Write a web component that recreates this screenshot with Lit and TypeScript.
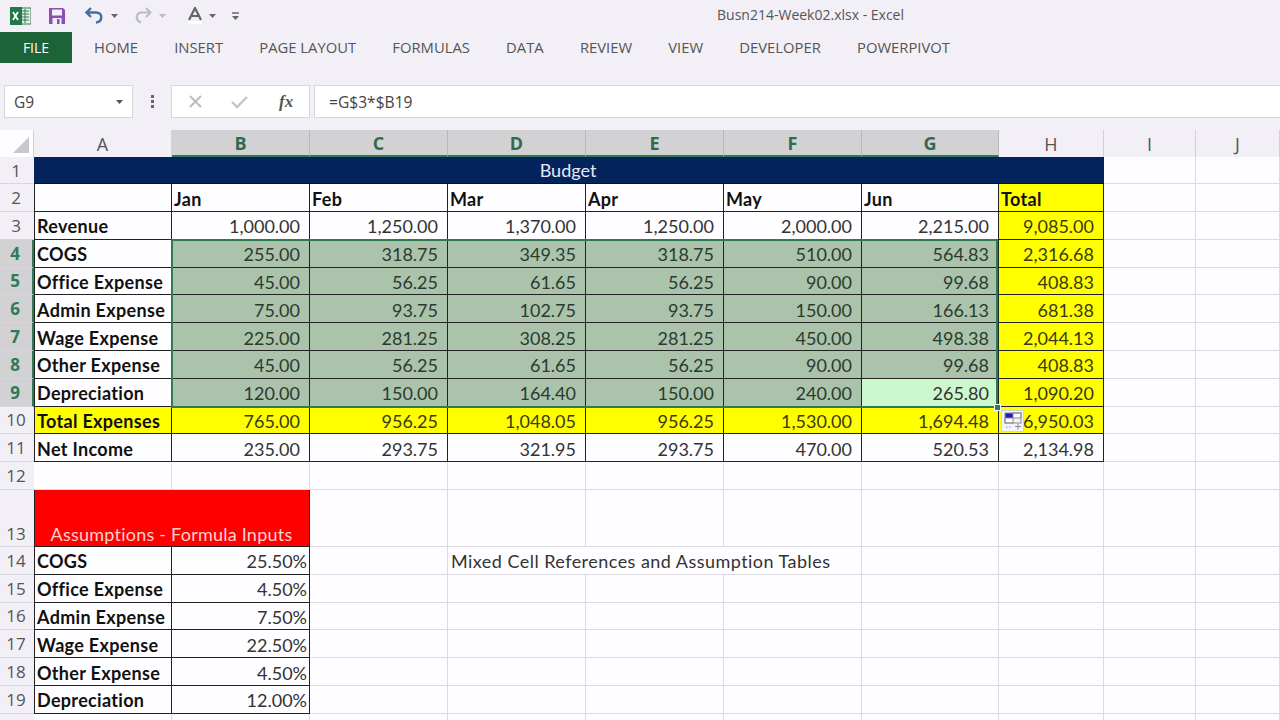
import { LitElement, html, css, svg } from "lit";
import { customElement } from "lit/decorators.js";

const COLS = ["A", "B", "C", "D", "E", "F", "G", "H", "I", "J"];
const MONTHS = ["Jan", "Feb", "Mar", "Apr", "May", "Jun"];
type R = [string, string[], string];
const BODY: R[] = [
  ["Revenue", ["1,000.00", "1,250.00", "1,370.00", "1,250.00", "2,000.00", "2,215.00"], "9,085.00"],
  ["COGS", ["255.00", "318.75", "349.35", "318.75", "510.00", "564.83"], "2,316.68"],
  ["Office Expense", ["45.00", "56.25", "61.65", "56.25", "90.00", "99.68"], "408.83"],
  ["Admin Expense", ["75.00", "93.75", "102.75", "93.75", "150.00", "166.13"], "681.38"],
  ["Wage Expense", ["225.00", "281.25", "308.25", "281.25", "450.00", "498.38"], "2,044.13"],
  ["Other Expense", ["45.00", "56.25", "61.65", "56.25", "90.00", "99.68"], "408.83"],
  ["Depreciation", ["120.00", "150.00", "164.40", "150.00", "240.00", "265.80"], "1,090.20"],
  ["Total Expenses", ["765.00", "956.25", "1,048.05", "956.25", "1,530.00", "1,694.48"], "6,950.03"],
  ["Net Income", ["235.00", "293.75", "321.95", "293.75", "470.00", "520.53"], "2,134.98"],
];
const ASSUME: [string, string][] = [
  ["COGS", "25.50%"],
  ["Office Expense", "4.50%"],
  ["Admin Expense", "7.50%"],
  ["Wage Expense", "22.50%"],
  ["Other Expense", "4.50%"],
  ["Depreciation", "12.00%"],
];
const TABS = ["HOME", "INSERT", "PAGE LAYOUT", "FORMULAS", "DATA", "REVIEW", "VIEW", "DEVELOPER", "POWERPIVOT"];

const caret = svg`<svg class="caret" width="7" height="4" viewBox="0 0 7 4"><path d="M0 0h7L3.5 4z" fill="currentColor"/></svg>`;

@customElement("app-root")
export class AppRoot extends LitElement {
  static styles = css`
    :host {
      display: block;
      width: 1280px;
      height: 720px;
      overflow: hidden;
      background: #f2eff6;
      font-family: "Open Sans", "Liberation Sans", sans-serif;
      color: #444;
    }
    .title { display: flex; align-items: center; height: 31px; }
    .qat { display: flex; align-items: center; padding-left: 10px; height: 30px; }
    .qat svg { display: block; flex: none; }
    .caret { color: #666; }
    .caret.off { color: #bbb; }
    .s1 { margin-left: 17px; }
    .s2 { margin-left: 19px; }
    .s3 { margin-left: 7px; }
    .s4 { margin-left: 16px; }
    .s5 { margin-left: 7px; }
    .s6 { margin-left: 22px; }
    .s7 { margin-left: 7px; }
    .s8 { margin-left: 16px; }
    .doc {
      margin-left: auto;
      padding-right: 376px;
      font-size: 14px;
      color: #555;
      position: relative;
      top: -1px;
    }
    .tabs { display: flex; align-items: center; height: 32px; }
    .file {
      width: 72px;
      height: 31px;
      background: #1c6337;
      color: #fff;
      display: flex;
      align-items: center;
      justify-content: center;
      font-size: 14px;
    }
    .tablist { display: flex; gap: 36.2px; padding-left: 22px; font-size: 14.8px; color: #555; }
    .fbar { display: flex; align-items: stretch; height: 33px; margin-top: 22px; padding-left: 4px; }
    .box { background: #fff; border: 1px solid #d8d6dc; box-sizing: border-box; display: flex; align-items: center; }
    .name { width: 129px; padding: 0 9px 0 9px; justify-content: space-between; font-size: 15.5px; color: #444; }
    .name .caret { color: #555; }
    .dots { width: 38px; display: flex; align-items: center; justify-content: center; }
    .fx { width: 139px; padding-left: 16px; gap: 28px; }
    .fxt { font-family: "Liberation Serif", serif; font-style: italic; font-weight: 700; font-size: 17px; color: #555; margin-left: 3px; }
    .formula { flex: 1; margin-left: 4px; padding-left: 14px; font-size: 15.6px; color: #444; border-right: 0; }

    .sheet {
      position: relative;
      margin-top: 12px;
      display: grid;
      grid-template-columns: 34px 138px 138px 138px 138px 138px 138px 137px 105px 92px 84px;
      grid-template-rows: 27px 27px 28px repeat(10, 27.8px) 57px repeat(6, 27.8px) 27.8px;
      background: #fefdff;
      font-family: Lato, "Open Sans", sans-serif;
      font-size: 18px;
      color: #333;
    }
    .ch, .rh {
      display: flex;
      align-items: center;
      justify-content: center;
      background: #f2eff6;
      box-sizing: border-box;
      color: #555;
      font-family: "Open Sans", sans-serif;
      font-size: 18px;
    }
    .ch { border-right: 1px solid #d3d1d6; padding-top: 1px; }
    .ch.sel { background: #d2d1d3; color: #2f6b4d; font-weight: 700; border-bottom: 2px solid #2f7a55; border-right-color: #b9b9b9; }
    .corner { position: relative; border-right: 1px solid #d3d1d6; }
    .corner svg { position: absolute; right: 4px; bottom: 4px; }
    .rh { border-bottom: 1px solid #d8d6db; font-size: 17px; padding-right: 2px; }
    .rh.sel { background: #d2d1d3; color: #2f7a55; font-weight: 700; border-right: 2px solid #2f7a55; }
    .rh.tall { align-items: flex-end; padding-bottom: 1px; }
    .c {
      box-sizing: border-box;
      display: flex;
      align-items: center;
      padding: 2px 3px 0 2px;
      border-right: 1px solid #dcdadf;
      border-bottom: 1px solid #dcdadf;
      white-space: nowrap;
      overflow: visible;
      min-width: 0;
    }
    .k { border-right-color: #222; border-bottom-color: #222; }
    .first { border-left: 1px solid #222; }
    .num { justify-content: flex-end; padding-right: 9px; }
    .pct { justify-content: flex-end; padding-right: 2px; }
    .lab { font-weight: 700; color: #111; letter-spacing: 0.32px; }
    .g { background: #aac3aa; color: #2c3a2f; }
    .act { background: #cdf7cd; color: #333; }
    .y { background: #ffff00; color: #3a3a10; }
    .ink { color: #111; }
    .navy { background: #04235c; color: #e8e8f0; justify-content: center; border-right-color: #04235c; border-bottom-color: #111; padding-top: 0; }
    .red { background: #ff0000; color: #ffd0d0; justify-content: center; align-items: flex-end; padding-bottom: 1px; letter-spacing: 0.23px; }
    .note { letter-spacing: 0.46px; padding-left: 3px; }
    .s2c { grid-column: span 2; }
    .s3c { grid-column: span 3; }
    .s8c { grid-column: span 8; }
    .selbox {
      position: absolute;
      left: 171px;
      top: 109px;
      width: 827px;
      height: 169px;
      box-sizing: border-box;
      border: 2px solid #2f7a55;
      pointer-events: none;
    }
    .handle {
      position: absolute;
      right: -5px;
      bottom: -5px;
      width: 7px;
      height: 7px;
      background: #2f7a55;
      border: 1px solid #fff;
      box-sizing: border-box;
    }
    .paste {
      position: absolute;
      left: 1001px;
      top: 280px;
      width: 23px;
      height: 22px;
      background: #f4f4f6;
      border: 1px solid #d5d5d8;
      box-sizing: border-box;
    }
    .paste svg { display: block; }
  `;

  private renderRows() {
    const out: unknown[] = [];
    const rh = (n: number | string, cls = "") => html`<div class="rh ${cls}">${n}</div>`;
    const blanks = (n: number) => Array.from({ length: n }, () => html`<div class="c"></div>`);

    out.push(rh(1), html`<div class="c navy s8c">Budget</div>`, ...blanks(2));
    out.push(
      rh(2),
      html`<div class="c k first"></div>`,
      ...MONTHS.map((m) => html`<div class="c k lab">${m}</div>`),
      html`<div class="c k lab y ink">Total</div>`,
      ...blanks(2)
    );
    BODY.forEach((r, i) => {
      const rowNo = i + 3;
      const inSel = rowNo >= 4 && rowNo <= 9;
      const total = rowNo === 10;
      out.push(
        rh(rowNo, inSel ? "sel" : ""),
        html`<div class="c k first lab ${total ? "y ink" : ""}">${r[0]}</div>`,
        ...r[1].map((v, j) => {
          let cls = "";
          if (inSel) cls = rowNo === 9 && j === 5 ? "act" : "g";
          if (total) cls = "y";
          return html`<div class="c k num ${cls}">${v}</div>`;
        }),
        html`<div class="c k num ${rowNo === 11 ? "" : "y"}">${r[2]}</div>`,
        ...blanks(2)
      );
    });
    out.push(rh(12), ...blanks(10));
    out.push(rh(13, "tall"), html`<div class="c k first red s2c">Assumptions - Formula Inputs</div>`, ...blanks(8));
    ASSUME.forEach((a, i) => {
      const rowNo = 14 + i;
      out.push(
        rh(rowNo),
        html`<div class="c k first lab">${a[0]}</div>`,
        html`<div class="c k pct">${a[1]}</div>`
      );
      if (i === 0) {
        out.push(html`<div class="c"></div>`, html`<div class="c s3c note">Mixed Cell References and Assumption Tables</div>`, ...blanks(4));
      } else {
        out.push(...blanks(8));
      }
    });
    out.push(rh(""), ...blanks(10));
    return out;
  }

  render() {
    return html`
      <div class="title">
        <div class="qat">
          <svg width="21" height="20" viewBox="0 0 21 20">
            <rect x="9" y="2" width="12" height="16" fill="#e8efe9" stroke="#2f7a4f"/>
            <path d="M11 5h8M11 8h8M11 11h8M11 14h8M15 3v14" stroke="#2f7a4f" fill="none"/>
            <rect x="0" y="1" width="12" height="18" fill="#1f7a47"/>
            <path d="M3 6l5 8M8 6l-5 8" stroke="#fff" stroke-width="1.8" fill="none"/>
          </svg>
          <svg class="s1" width="18" height="18" viewBox="0 0 18 18">
            <path d="M1 1h14l2 2v14H1z" fill="#8a4fb0"/>
            <rect x="4" y="2.5" width="10" height="6" fill="#f2eff6"/>
            <rect x="4.5" y="11" width="9" height="6" fill="#f2eff6"/>
            <rect x="9" y="12" width="2.5" height="5" fill="#8a4fb0"/>
          </svg>
          <svg class="s2" width="19" height="17" viewBox="0 0 19 17">
            <path d="M6 1L1.500 5.500 6 10" fill="none" stroke="#3d6fa8" stroke-width="2.400"/>
            <path d="M2 5.500h9c7 0 7 9 0 10" fill="none" stroke="#3d6fa8" stroke-width="2.400"/>
          </svg>
          <svg class="caret s3" width="7" height="4" viewBox="0 0 7 4"><path d="M0 0h7L3.500 4z" fill="currentColor"/></svg>
          <svg class="s4" width="18" height="17" viewBox="0 0 18 17">
            <path d="M12 1l4.500 4.500L12 10" fill="none" stroke="#bdbcc0" stroke-width="2.200"/>
            <path d="M16 5.500H8c-6.500 0-7 8-1 10" fill="none" stroke="#bdbcc0" stroke-width="2.200"/>
          </svg>
          <svg class="caret off s5" width="7" height="4" viewBox="0 0 7 4"><path d="M0 0h7L3.500 4z" fill="currentColor"/></svg>
          <svg class="s6" width="14" height="17" viewBox="0 0 14 17">
            <path d="M1 13L7 1l6 12M3.400 9h7.200" fill="none" stroke="#666" stroke-width="2.200"/>
            <rect x="0" y="14" width="14" height="3" fill="#fff"/>
          </svg>
          <svg class="caret s7" width="7" height="4" viewBox="0 0 7 4"><path d="M0 0h7L3.500 4z" fill="currentColor"/></svg>
          <svg class="s8" width="7" height="8" viewBox="0 0 7 8">
            <path d="M0 1h7" stroke="#666" stroke-width="1.500"/>
            <path d="M0 4h7L3.500 8z" fill="#666"/>
          </svg>
        </div>
        <div class="doc">Busn214-Week02.xlsx - Excel</div>
      </div>
      <div class="tabs">
        <div class="file">FILE</div>
        <div class="tablist">${TABS.map((t) => html`<span>${t}</span>`)}</div>
      </div>
      <div class="fbar">
        <div class="box name">G9 ${caret}</div>
        <div class="dots">
          <svg width="3" height="13" viewBox="0 0 3 13"><path d="M0 0h3v3H0zM0 5h3v3H0zM0 10h3v3H0z" fill="#666"/></svg>
        </div>
        <div class="box fx">
          <svg width="15" height="15" viewBox="0 0 15 15"><path d="M2 2l11 11M13 2L2 13" stroke="#bdbcc0" stroke-width="2" fill="none"/></svg>
          <svg width="17" height="14" viewBox="0 0 17 14"><path d="M1 7l5 5L16 2" stroke="#c5c4c8" stroke-width="2.400" fill="none"/></svg>
          <span class="fxt">fx</span>
        </div>
        <div class="box formula">=G$3*$B19</div>
      </div>
      <div class="sheet">
        <div class="corner">
          <svg width="16" height="16" viewBox="0 0 16 16"><path d="M16 0v16H0z" fill="#c9c8cb"/></svg>
        </div>
        ${COLS.map((c, i) => html`<div class="ch ${i >= 1 && i <= 6 ? "sel" : ""}">${c}</div>`)}
        ${this.renderRows()}
        <div class="selbox"><div class="handle"></div></div>
        <div class="paste">
          <svg width="21" height="20" viewBox="0 0 21 20">
            <rect x="3" y="2" width="8" height="5" fill="#1c1cc0"/>
            <rect x="11" y="2" width="8" height="5" fill="#fff" stroke="#8a8a96"/>
            <rect x="3" y="7" width="8" height="5" fill="#fff" stroke="#8a8a96"/>
            <rect x="3" y="2" width="16" height="10" fill="none" stroke="#8a8a96"/>
            <path d="M4 16h6" stroke="#9a9aa6" stroke-dasharray="1.500 1.500" fill="none"/>
            <path d="M16 12.500v6M13 15.500h6" stroke="#8a8a96" fill="none"/>
          </svg>
        </div>
      </div>
    `;
  }
}
